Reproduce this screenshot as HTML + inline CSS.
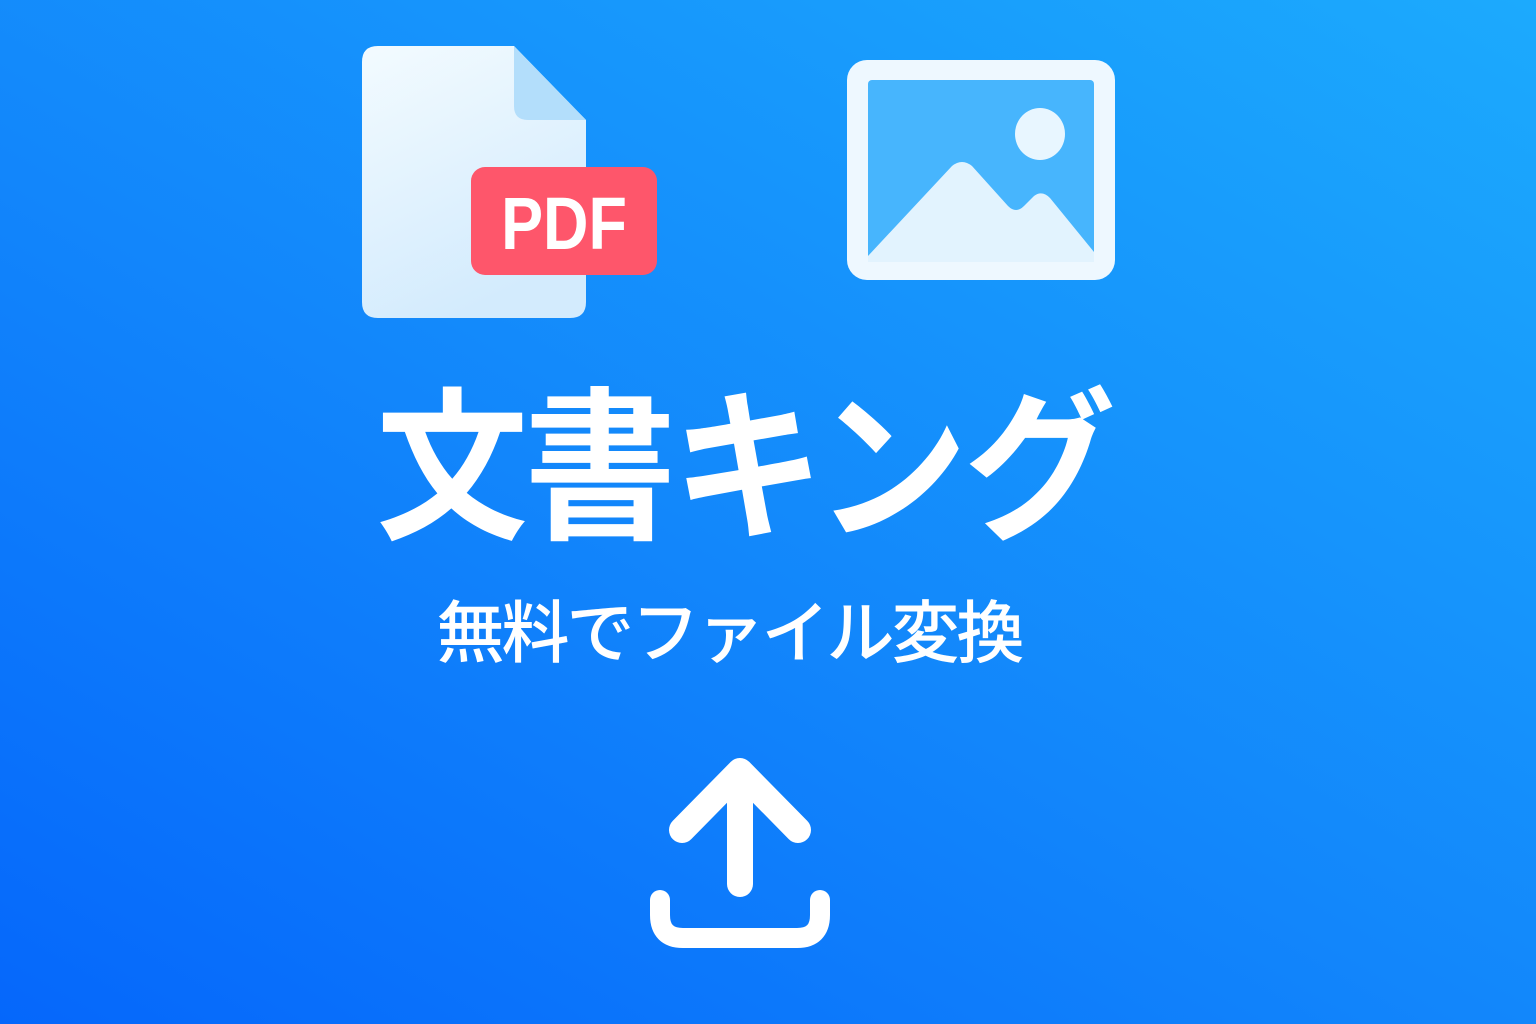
<!DOCTYPE html>
<html><head><meta charset="utf-8"><style>
html,body{margin:0;padding:0}
body{width:1536px;height:1024px;overflow:hidden;position:relative;
background:linear-gradient(30deg,#0567fb 0%,#1286fb 45%,#1caafd 100%);
font-family:"Liberation Sans","Noto Sans CJK JP",sans-serif;color:#fff}
.t{position:absolute;left:0;width:1536px;text-align:center;font-weight:700;white-space:nowrap}
</style></head><body>
<svg width="1536" height="1024" style="position:absolute;left:0;top:0">
<defs>
<linearGradient id="doc" x1="0" y1="0" x2="0.4" y2="1"><stop offset="0" stop-color="#f3fbff"/><stop offset="1" stop-color="#d3ebfd"/></linearGradient>
</defs>
<path d="M378 46 H514 L586 120 V302 Q586 318 570 318 H378 Q362 318 362 302 V62 Q362 46 378 46Z" fill="url(#doc)"/>
<path d="M514 46 L586 120 H528 Q514 120 514 106Z" fill="#b3defb"/>
<rect x="471" y="167" width="186" height="108" rx="14" fill="#fe566b"/>
<text x="564" y="249" text-anchor="middle" font-family="Liberation Sans" font-weight="700" font-size="74" fill="#fff" transform="translate(564 0) scale(0.85 1) translate(-564 0)">PDF</text>
<rect x="847" y="60" width="268" height="220" rx="20" fill="#eef8ff"/>
<rect x="868" y="80" width="226" height="182" rx="4" fill="#47b5fd"/>
<path d="M868 256 L952 166 Q962 158 972 166 L1008 206 Q1016 214 1024 206 L1034 196 Q1042 190 1050 198 L1094 252 V262 H868Z" fill="#e2f3fe"/>
<ellipse cx="1040" cy="134" rx="25" ry="26" fill="#e8f6ff"/>
<g stroke="#fff" stroke-width="26" stroke-linecap="round" stroke-linejoin="round" fill="none">
<path d="M740 884 V772 M682 830 L740 771 L798 830"/>
</g>
<path d="M660 900 V915 Q660 938 683 938 H797 Q820 938 820 915 V900" stroke="#fff" stroke-width="20" stroke-linecap="round" fill="none"/>
</svg>
<div class="t" style="top:336px;font-size:152px;letter-spacing:-4px;left:-24px;transform:scaleY(1.08);transform-origin:50% 0">文書キング</div>
<div class="t" style="top:578px;font-size:68px;font-weight:500;left:-39px;letter-spacing:-3px">無料でファイル変換</div>
</body></html>
